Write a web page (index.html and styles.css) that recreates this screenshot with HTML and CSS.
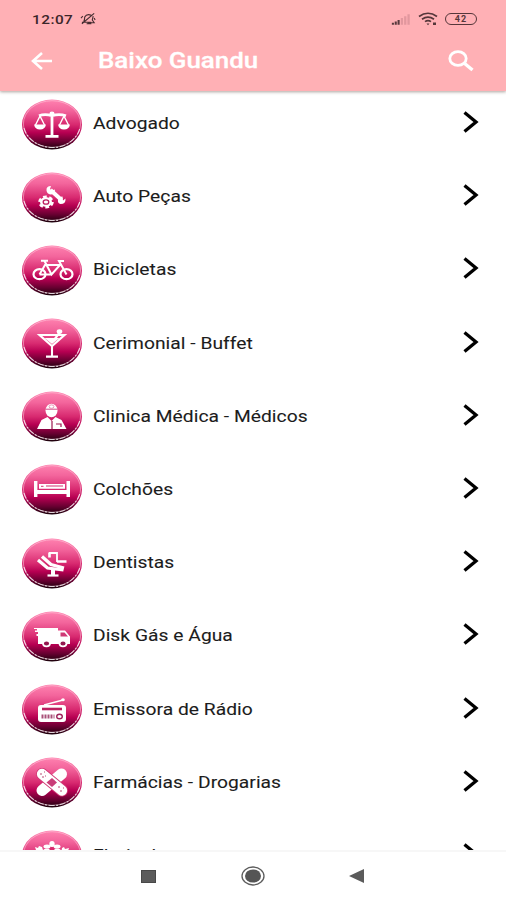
FILE: index.html
```html
<!DOCTYPE html>
<html lang="pt-BR">
<head>
<meta charset="utf-8">
<title>Baixo Guandu</title>
<link rel="stylesheet" href="styles.css">
</head>
<body>
<svg class="defs" width="0" height="0" aria-hidden="true">
  <defs>
    <linearGradient id="pink" x1="0" y1="0" x2="0" y2="1">
      <stop offset="0" stop-color="#ff82b0"/>
      <stop offset=".22" stop-color="#f3659c"/>
      <stop offset=".5" stop-color="#d82a70"/>
      <stop offset=".66" stop-color="#b70052"/>
      <stop offset=".84" stop-color="#680031"/>
      <stop offset="1" stop-color="#180009"/>
    </linearGradient>
    <symbol id="disc" viewBox="0 0 60 51">
      <ellipse cx="30" cy="25.5" rx="30" ry="25" fill="url(#pink)"/>
      <ellipse cx="30" cy="25" rx="28.6" ry="23.3" fill="none" stroke="#ffd0e0" stroke-width=".8" stroke-opacity=".65"/>
      <path d="M2 29C5 40 16 48 30 48.5S55 40 58 29" fill="none" stroke="#fff" stroke-width="1.1" stroke-opacity=".75" stroke-dasharray="6 1.5 2 1.5"/>
    </symbol>
    <symbol id="chevron" viewBox="0 0 16 22"><path d="M1.5 1.5 13 11 1.5 20.5" fill="none" stroke="#000" stroke-width="3.3"/></symbol>
  </defs>
</svg>
<div class="screen">
  <header class="top">
    <div class="status">
      <span class="clock">12:07</span>
      <svg class="mute" viewBox="0 0 18 14"><path d="M2 10.5h10M4 10Q5 8 5 5Q7 1 12 3M14 4l-1 4 2 3H8M2 12 15 1M7 12h5M1 6l2-2M15 6l1 2" fill="none" stroke="#452d31" stroke-width="1.2"/></svg>
      <span class="grow"></span>
      <svg class="signal" viewBox="0 0 20 12"><path d="M2 12v-2M5 12V8.5M8 12V7" stroke="#59393d" stroke-width="2.2"/><path d="M11.5 12V5M15 12V3M18.5 12V1" stroke="#e2979e" stroke-width="2.4"/></svg>
      <svg class="wifi" viewBox="0 0 20 14"><path d="M1 4.5Q10-2 19 4.5M4 7.2Q10 3 16 7.2M7 9.6Q10 7.5 13 9.6" fill="none" stroke="#55363a" stroke-width="1.7"/><path d="M8.5 11.5h3L10 13.3zM15 10.5h3v2.5h-3z" fill="#55363a"/></svg>
      <span class="battery">42</span>
    </div>
    <div class="bar">
      <svg class="back" viewBox="0 0 22 18"><path d="M21 9H2M11 1 2 9l9 8" fill="none" stroke="#fff" stroke-width="2.6"/></svg>
      <h1>Baixo Guandu</h1>
      <svg class="search" viewBox="0 0 26 22"><ellipse cx="10" cy="8.5" rx="8.2" ry="6.8" fill="none" stroke="#fff" stroke-width="2.8"/><path d="m16 13 8.5 7" stroke="#fff" stroke-width="3.4"/></svg>
    </div>
  </header>
  <main class="list">
    <div class="row"><svg class="icon" viewBox="0 0 60 51"><use href="#disc"/><g fill="none" stroke="#fff"><path d="M30 13v24M17 16.8q6-2.4 13 0 7-2.4 14 0" stroke-width="2.8"/><path d="m18 17-4.5 9M18 17l4.5 9M42 17l-4.5 9M42 17l4.5 9" stroke-width="1.4"/></g><path d="M12 25.5h12q-1 5-6 5t-6-5zM36 25.5h12q-1 5-6 5t-6-5zM23.5 36h13v2.7h-13z" fill="#fff"/><ellipse cx="30" cy="14.7" rx="2.6" ry="2.2" fill="#fff"/></svg><span class="label">Advogado</span><svg class="chev"><use href="#chevron"/></svg></div>

    <div class="row"><svg class="icon" viewBox="0 0 60 51"><use href="#disc"/><path d="m28.500 18 11 10" stroke="#fff" stroke-width="4"/><path d="M24.500 18.500q-.5-4.500 4.500-4.500l-1 3 2 1.500 3-1q0 5-4.500 5-3.500-.5-4-4zM43.500 26.500q.5 5.500-5 5.500-3-.5-2.500-4 1-3.500 4.500-3.500l.5 4z" fill="#fff"/><ellipse cx="24" cy="30" rx="6" ry="4.800" fill="#fff"/><ellipse cx="24" cy="30" rx="6.600" ry="5.300" fill="none" stroke="#fff" stroke-width="2.400" stroke-dasharray="3.700 2.500"/><ellipse cx="24" cy="30" rx="2.800" ry="2.200" fill="#fff" stroke="#bd1d61" stroke-width="1.300"/></svg><span class="label">Auto Peças</span><svg class="chev"><use href="#chevron"/></svg></div>

    <div class="row"><svg class="icon" viewBox="0 0 60 51"><use href="#disc"/><g fill="none" stroke="#fff" stroke-width="2.2"><ellipse cx="17.5" cy="29.2" rx="6" ry="5"/><ellipse cx="44.500" cy="29.2" rx="6" ry="5"/><path d="M17.5 29.5 23 20h15l-8.500 9.500-7-13.500M17.500 29.500h12M44.500 29.5 37 16h5M19 15.8h7" stroke-width="2"/></g></svg><span class="label">Bicicletas</span><svg class="chev"><use href="#chevron"/></svg></div>

    <div class="row"><svg class="icon" viewBox="0 0 60 51"><use href="#disc"/><path d="M17.5 17h25L30 28z" fill="none" stroke="#fff" stroke-width="2.1"/><path d="M22.500 20h15L30 26zM24 37.500h12v2.200H24z" fill="#fff"/><path d="M30 27v12M32 22l6-8" stroke="#fff" stroke-width="2.1"/><ellipse cx="37.5" cy="13.500" rx="2.8" ry="2.3" fill="#fff"/></svg><span class="label">Cerimonial - Buffet</span><svg class="chev"><use href="#chevron"/></svg></div>

    <div class="row"><svg class="icon" viewBox="0 0 60 51"><use href="#disc"/><ellipse cx="29.500" cy="19.500" rx="6" ry="6.700" fill="#fff"/><path d="M23.500 18.200h12" stroke="#d34c86" stroke-width="1"/><ellipse cx="29.500" cy="15.6" rx="2.4" ry="1.7" fill="#fff" stroke="#df6c9a" stroke-width=".7"/><path d="M15 38 19.500 29l6-3 4 4 4-4 6 3 5 9z" fill="#fff"/><path d="M30 30v8m4-5h5v3" fill="none" stroke="#9c164e" stroke-width="1.2"/></svg><span class="label">Clinica Médica - Médicos</span><svg class="chev"><use href="#chevron"/></svg></div>

    <div class="row"><svg class="icon" viewBox="0 0 60 51"><use href="#disc"/><path d="M12 17h3.4v16H12zM44.5 17h3.5v16h-3.5zM14 26h31v4H14zM17 20h26v4.8H17z" fill="#fff"/><path d="M19 22.300h2.500M24 22h17" stroke="#cf3472" stroke-width="1"/></svg><span class="label">Colchões</span><svg class="chev"><use href="#chevron"/></svg></div>

    <div class="row"><svg class="icon" viewBox="0 0 60 51"><use href="#disc"/><g fill="none" stroke="#fff"><path d="m16 22 9.500 8 16 2" stroke-width="3.2"/><path d="m20 18.500 9 8 13 3.500" stroke-width="3.300"/><path d="M27 15h8v9" stroke-width="1.8"/><path d="M27.500 14.500v5M35 23.500h9.500" stroke-width="2.6"/><path d="M31 31v7" stroke-width="4"/><path d="M25.500 37.500h11" stroke-width="2.2"/></g></svg><span class="label">Dentistas</span><svg class="chev"><use href="#chevron"/></svg></div>

    <div class="row"><svg class="icon" viewBox="0 0 60 51"><use href="#disc"/><path d="M12 17h24v2.500h7l5 6v7.500H16v-8h-1.500v-2h1.500v-2h-3v-1.500h2V18h-3z" fill="#fff"/><path d="M38.500 21.500h4l3.500 4h-7.500z" fill="#ce3975"/><g fill="#93184f" stroke="#fff" stroke-width="1.8"><ellipse cx="24.5" cy="32.500" rx="3.5" ry="2.800"/><ellipse cx="41" cy="32.500" rx="3.5" ry="2.800"/></g></svg><span class="label">Disk Gás e Água</span><svg class="chev"><use href="#chevron"/></svg></div>

    <div class="row"><svg class="icon" viewBox="0 0 60 51"><use href="#disc"/><rect x="16" y="21" width="28" height="17" rx="3" fill="#fff"/><path d="m22 21 19-5" stroke="#fff" stroke-width="1.6"/><ellipse cx="41" cy="15.8" rx="1.8" ry="1.5" fill="#fff"/><path d="M20 25h20" stroke="#bb1f60" stroke-width="2.6"/><path d="M19.5 32.5h13" stroke="#a95178" stroke-width="4" stroke-dasharray="2 1"/><ellipse cx="37.5" cy="32.5" rx="2.8" ry="2.2" fill="#fff" stroke="#9e245b" stroke-width="1.4"/></svg><span class="label">Emissora de Rádio</span><svg class="chev"><use href="#chevron"/></svg></div>

    <div class="row"><svg class="icon" viewBox="0 0 60 51"><use href="#disc"/><g stroke="#fff" stroke-linecap="round"><path d="M39.500 17 20 33.500" stroke-width="11"/><path d="m20 17 20 16.500" stroke="#d13a76" stroke-width="12"/><path d="m20 17 20 16.500" stroke-width="10.300"/></g><path d="m30 21 5 4.500-5 4.500-5.500-4.500z" fill="#c93d78"/><path d="M18 17h2m2-2h1m-3 5h2m14 10h2m0 4h2m1-3h1M23 19h1" stroke="#b94a77" stroke-width="1.2"/></svg><span class="label">Farmácias - Drogarias</span><svg class="chev"><use href="#chevron"/></svg></div>

    <div class="row"><svg class="icon" viewBox="0 0 60 51"><use href="#disc"/><g fill="#fff"><ellipse cx="30" cy="14" rx="2.7" ry="3"/><ellipse cx="25" cy="16.5" rx="3.5" ry="2"/><ellipse cx="35" cy="16.5" rx="3.5" ry="2"/><ellipse cx="25" cy="21" rx="4" ry="2.5"/><ellipse cx="35" cy="21" rx="4" ry="2.5"/><path d="m13 17 3 1 1-2 3 1 2 6h-7zM40 18l2-1 1 2 4-1-2 6h-6z"/><path d="M30 20v18" stroke="#fff" stroke-width="3"/></g><ellipse cx="30" cy="19" rx="2.5" ry="2" fill="#d72b6e"/></svg><span class="label">Floricultura</span><svg class="chev"><use href="#chevron"/></svg></div>
  </main>
  <nav class="nav">
    <span class="recent"></span>
    <svg class="home" viewBox="0 0 24 20"><ellipse cx="12" cy="10" rx="11" ry="9" fill="#fff" stroke="#5c5c5c" stroke-width="1.3"/><ellipse cx="12" cy="10" rx="8" ry="6.6" fill="#555"/></svg>
    <svg class="prev" viewBox="0 0 15 14"><path d="M0 7 15 0v14z" fill="#5b5b5b"/></svg>
  </nav>
</div>
</body>
</html>
```

FILE: styles.css
```css
* { box-sizing: border-box; }
body { margin: 0; background: #fff; font-family: Roboto, "Liberation Sans", sans-serif; }
svg { display: block; flex: none; }
.defs { position: absolute; }
.screen { width: 506px; height: 900px; display: flex; flex-direction: column; overflow: hidden; }
.top { height: 91px; flex: none; background: #ffb0b5; box-shadow: 0 1px 3px rgba(70, 50, 40, .45); position: relative; z-index: 1; }
.status { height: 38px; padding: 0 29px 0 32px; display: flex; align-items: center; }
.clock { width: 48px; font-size: 13px; font-weight: 500; line-height: 18px; color: #3b2529; letter-spacing: .4px; white-space: nowrap; transform: scaleX(1.18); transform-origin: 0 50%; padding-top: 1px; }
.mute { width: 17px; height: 14px; }
.grow { flex: 1; }
.signal { width: 19px; height: 12px; margin-right: 8px; }
.wifi { width: 20px; height: 14px; margin-right: 7px; }
.battery { width: 32px; height: 12px; border: 1.5px solid #55363a; border-radius: 6px; font-size: 9px; font-weight: 700; line-height: 10px; text-align: center; color: #55363a; letter-spacing: 1px; }
.bar { height: 46px; padding: 0 32px 0 31px; display: flex; align-items: center; }
.back { width: 22px; height: 18px; }
h1 { flex: 1; margin: 0 0 0 45px; font-size: 22px; font-weight: 500; line-height: 28px; color: #fff; white-space: nowrap; transform: scaleX(1.178); transform-origin: 0 50%; -webkit-text-stroke: .3px #fff; }
.search { width: 26px; height: 22px; }
.list { flex: none; height: 759px; padding-top: 7.5px; overflow: hidden; }
.row { height: 73.2px; padding: 0 27px 0 22px; display: flex; align-items: flex-start; }
.icon { width: 60px; height: 51px; }
.label { flex: 1; margin: 13.5px 0 0 11px; font-size: 16px; line-height: 24px; color: #1c1c1c; letter-spacing: .04px; white-space: nowrap; transform: scaleX(1.2); transform-origin: 0 50%; -webkit-text-stroke: .1px #1c1c1c; }
.chev { width: 16px; height: 22px; margin-top: 12.5px; }
.nav { flex: 1; border-top: 2px solid #f7f7f7; padding: 0 142px 0 141px; display: flex; align-items: center; justify-content: space-between; background: #fff; position: relative; z-index: 1; }
.recent { width: 15px; height: 13px; background: #5b5b5b; border: 1px solid #484848; }
.home { width: 24px; height: 20px; }
.prev { width: 15px; height: 14px; }
```
